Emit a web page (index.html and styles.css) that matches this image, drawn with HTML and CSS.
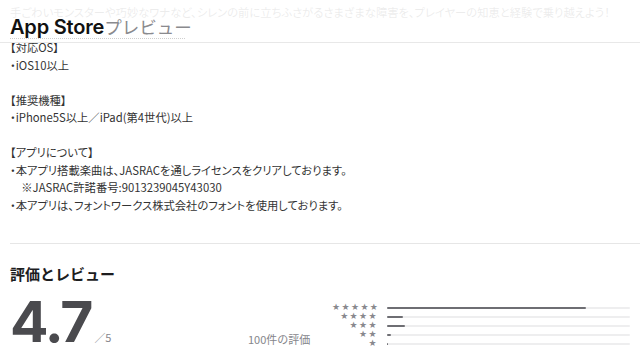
FILE: index.html
```html
<!DOCTYPE html>
<html lang="ja">
<head>
<meta charset="utf-8">
<link rel="stylesheet" href="styles.css">
</head>
<body>
<div class="page">
  <header class="topbar">
    <h1 class="title"><span class="brand">App Store</span><span class="preview">プレビュー</span></h1>
    <div class="dotted"></div>
  </header>

  <section class="desc">
    <p>手ごわいモンスターや巧妙なワナなど、シレンの前に立ちふさがるさまざまな障害を、プレイヤーの知恵と経験で乗り越えよう！</p>
    <p class="blank">&nbsp;</p>
    <p>【対応OS】</p>
    <p>・iOS10以上</p>
    <p class="blank">&nbsp;</p>
    <p>【推奨機種】</p>
    <p>・iPhone5S以上／iPad(第4世代)以上</p>
    <p class="blank">&nbsp;</p>
    <p>【アプリについて】</p>
    <p>・本アプリ搭載楽曲は、JASRACを通しライセンスをクリアしております。</p>
    <p>　※JASRAC許諾番号:9013239045Y43030</p>
    <p>・本アプリは、フォントワークス株式会社のフォントを使用しております。</p>
  </section>

  <hr class="sep">

  <section class="ratings">
    <h2 class="heading">評価とレビュー</h2>
    <div class="rating-row">
      <div class="summary">
        <span class="score">4.7</span><span class="outof">／5</span>
      </div>
      <div class="count">100件の評価</div>
      <div class="histogram">
        <div class="hrow"><span class="stars">★★★★★</span><span class="track"><span class="fill" style="width:82%"></span></span></div>
        <div class="hrow"><span class="stars">★★★★</span><span class="track"><span class="fill" style="width:6.6%"></span></span></div>
        <div class="hrow"><span class="stars">★★★</span><span class="track"><span class="fill" style="width:7.4%"></span></span></div>
        <div class="hrow"><span class="stars">★★</span><span class="track"><span class="fill" style="width:1.8%"></span></span></div>
        <div class="hrow"><span class="stars">★</span><span class="track"><span class="fill" style="width:0.5%"></span></span></div>
      </div>
    </div>
  </section>
</div>
</body>
</html>
```

FILE: styles.css
```css
html, body {
  margin: 0;
  padding: 0;
  background: #ffffff;
}
body {
  font-family: "Noto Sans CJK JP", "Inter", sans-serif;
  color: #333333;
  overflow: hidden;
}
.page {
  position: relative;
  width: 640px;
  height: 361px;
  overflow: hidden;
}
.topbar {
  position: absolute;
  top: 0;
  left: 0;
  right: 0;
  height: 43px;
  background: rgba(255, 255, 255, 0.91);
  border-bottom: 1px solid #e8e8e8;
  padding-left: 10px;
  box-sizing: border-box;
  z-index: 2;
}
.title {
  margin: 0;
  padding-top: 9px;
  font-weight: normal;
  line-height: 22px;
  white-space: nowrap;
}
.brand {
  font-family: "Inter", "Noto Sans", sans-serif;
  font-weight: 600;
  font-size: 20px;
  color: #111111;
  letter-spacing: -0.2px;
}
.preview {
  font-family: "Noto Sans CJK JP", sans-serif;
  font-size: 17.5px;
  color: #8a8a8e;
  font-weight: 400;
}
.dotted {
  width: 175px;
  border-top: 1px dotted #cfcfcf;
}
.desc {
  padding: 4px 0 0 10px;
  font-size: 11.3px;
  line-height: 17.5px;
  font-feature-settings: "palt";
  color: #333333;
}
.desc p {
  margin: 0;
  white-space: nowrap;
}
.sep {
  border: 0;
  border-top: 1px solid #e6e6e6;
  margin: 29px 0 0 10px;
  height: 0;
}
.ratings {
  padding-left: 10px;
}
.heading {
  margin: 20px 0 0 0;
  font-size: 15px;
  line-height: 20px;
  font-weight: 700;
  color: #1d1d1f;
}
.rating-row {
  display: flex;
  align-items: flex-end;
  margin-top: 14px;
}
.summary {
  display: flex;
  align-items: baseline;
  width: 238px;
}
.score {
  font-family: "Inter", "Noto Sans", sans-serif;
  font-size: 57px;
  font-weight: 700;
  line-height: 48px;
  letter-spacing: -2px;
  color: #4a4a4e;
}
.outof {
  font-size: 11px;
  color: #86868b;
  margin-left: 3px;
}
.count {
  font-size: 11px;
  line-height: 14px;
  color: #86868b;
  width: 84px;
}
.histogram {
  display: flex;
  flex-direction: column;
  width: 298px;
  margin-bottom: -2px;
}
.hrow {
  display: flex;
  align-items: center;
  height: 9px;
  overflow: hidden;
}
.stars {
  width: 46px;
  text-align: right;
  font-size: 9px;
  line-height: 9px;
  height: 9px;
  letter-spacing: 1.4px;
  color: #88888d;
  font-family: "DejaVu Sans", sans-serif;
}
.track {
  flex: 1;
  margin-left: 9px;
  height: 2px;
  background: #eeeeef;
  border-radius: 1px;
}
.fill {
  display: block;
  height: 2px;
  background: #6e6e73;
  border-radius: 1px;
}
```
